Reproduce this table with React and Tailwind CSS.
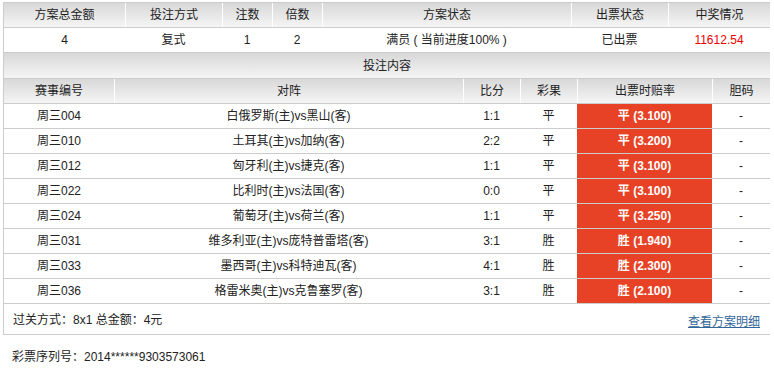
import React from "react";

const FONT = { fontFamily: '"Liberation Sans", Arial, "Noto Sans CJK SC", sans-serif' };

const hdr = "bg-gradient-to-b from-[#d8d8d8] to-[#f5f5f5]";

const rows = [
  ["周三004", "白俄罗斯(主)vs黑山(客)", "1:1", "平", "平 (3.100)"],
  ["周三010", "土耳其(主)vs加纳(客)", "2:2", "平", "平 (3.200)"],
  ["周三012", "匈牙利(主)vs捷克(客)", "1:1", "平", "平 (3.100)"],
  ["周三022", "比利时(主)vs法国(客)", "0:0", "平", "平 (3.100)"],
  ["周三024", "葡萄牙(主)vs荷兰(客)", "1:1", "平", "平 (3.250)"],
  ["周三031", "维多利亚(主)vs庞特普雷塔(客)", "3:1", "胜", "胜 (1.940)"],
  ["周三033", "墨西哥(主)vs科特迪瓦(客)", "4:1", "胜", "胜 (2.300)"],
  ["周三036", "格雷米奥(主)vs克鲁塞罗(客)", "3:1", "胜", "胜 (2.100)"],
];

function HCell({ w, children, first }) {
  return (
    <div
      className={`${w} flex items-center justify-center ${first ? "" : "border-l border-white"}`}
    >
      {children}
    </div>
  );
}

export default function App() {
  return (
    <div className="w-[774px] h-[380px] bg-white text-[12px] text-[#222]" style={FONT}>
      <div className="pt-[2px] pl-[3px] w-[770px]">
        <div className="border-l border-t border-[#cccccc]">
          <div className={`flex h-[25px] border-b border-[#cccccc] ${hdr}`}>
            <HCell w="w-[121px]" first>方案总金额</HCell>
            <HCell w="w-[97px]">投注方式</HCell>
            <HCell w="w-[50px]">注数</HCell>
            <HCell w="w-[50px]">倍数</HCell>
            <HCell w="w-[249px]">方案状态</HCell>
            <HCell w="w-[97px]">出票状态</HCell>
            <HCell w="w-[102px]">中奖情况</HCell>
          </div>
          <div className="flex h-[25px] border-b border-[#cccccc]">
            <HCell w="w-[121px]" first>4</HCell>
            <HCell w="w-[97px]" first>复式</HCell>
            <HCell w="w-[50px]" first>1</HCell>
            <HCell w="w-[50px]" first>2</HCell>
            <HCell w="w-[249px]" first>满员 ( 当前进度100% )</HCell>
            <HCell w="w-[97px]" first>已出票</HCell>
            <HCell w="w-[102px]" first><span className="text-[#ee0000]">11612.54</span></HCell>
          </div>
          <div className={`flex h-[26px] items-center justify-center border-b border-[#cccccc] ${hdr}`}>
            投注内容
          </div>
          <div className={`flex h-[25px] border-b border-[#cccccc] ${hdr}`}>
            <HCell w="w-[110px]" first>赛事编号</HCell>
            <HCell w="w-[349px]">对阵</HCell>
            <HCell w="w-[57px]">比分</HCell>
            <HCell w="w-[57px]">彩果</HCell>
            <HCell w="w-[135px]">出票时赔率</HCell>
            <HCell w="w-[58px]">胆码</HCell>
          </div>
          {rows.map((r) => (
            <div key={r[0]} className="flex h-[25px] border-b border-[#cccccc]">
              <div className="w-[110px] flex items-center justify-center">{r[0]}</div>
              <div className="w-[349px] flex items-center justify-center">{r[1]}</div>
              <div className="w-[57px] flex items-center justify-center">{r[2]}</div>
              <div className="w-[57px] flex items-center justify-center">{r[3]}</div>
              <div className="w-[135px] flex items-center justify-center bg-[#e84226] text-white font-bold">
                {r[4]}
              </div>
              <div className="w-[58px] flex items-center justify-center">-</div>
            </div>
          ))}
          <div className="flex h-[31px] border-b border-[#cccccc] justify-between pl-[9px] pr-[10px]">
            <div className="pt-[7px]">过关方式：8x1 总金额：4元</div>
            <a href="#" className="pt-[9px] text-[#336699] underline">查看方案明细</a>
          </div>
        </div>
      </div>
      <div className="pl-[12px] pt-[13px]">彩票序列号：2014******9303573061</div>
    </div>
  );
}
